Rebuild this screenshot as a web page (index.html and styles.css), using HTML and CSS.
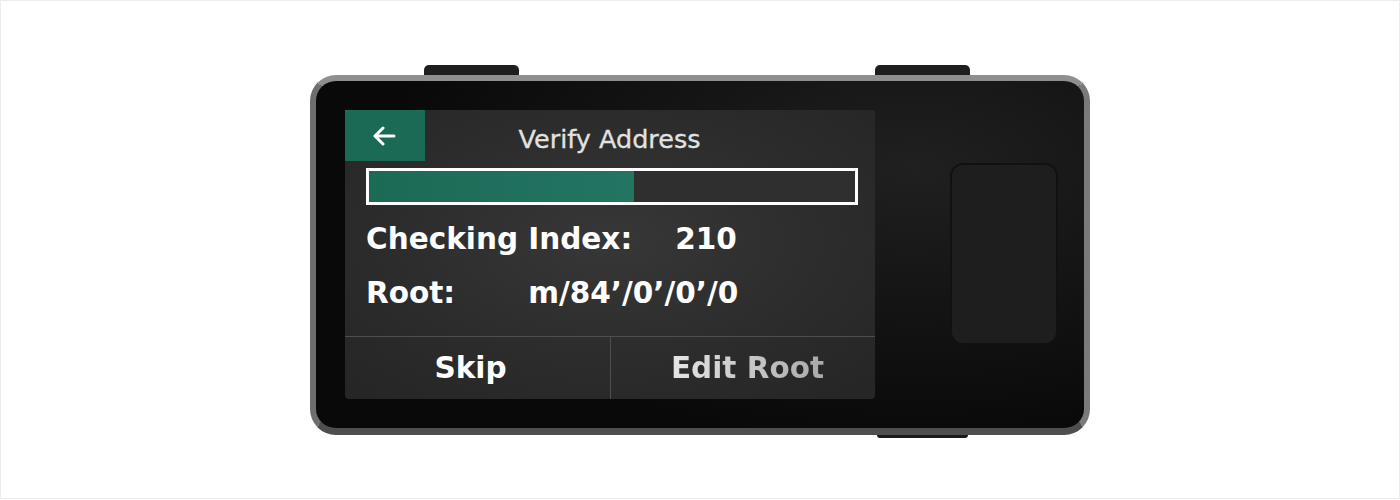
FILE: index.html
```html
<!DOCTYPE html>
<html>
<head>
<meta charset="utf-8">
<link rel="stylesheet" href="styles.css">
</head>
<body>
<div class="frame">
  <div class="device">
    <div class="tabs-top">
      <div class="tab tab-left"></div>
      <div class="tab tab-right"></div>
    </div>
    <div class="body">
      <div class="screen">
        <div class="header">
          <div class="back">
            <svg width="24" height="20" viewBox="0 0 24 20"><path d="M22 10H3M11 2L3 10l8 8" fill="none" stroke="#fff" stroke-width="3" stroke-linecap="round" stroke-linejoin="round"/></svg>
          </div>
          <div class="title">Verify Address</div>
        </div>
        <div class="progress"><div class="fill" style="width:54.5%"></div></div>
        <div class="row row-index"><span class="label">Checking Index:</span><span class="value">210</span></div>
        <div class="row row-root"><span class="label">Root:</span><span class="value">m/84’/0’/0’/0</span></div>
        <div class="actions">
          <div class="btn btn-skip">Skip</div>
          <div class="btn btn-edit"><span class="edit-text">Edit Root</span></div>
        </div>
      </div>
      <div class="sensor"></div>
    </div>
    <div class="tab-bottom"></div>
  </div>
</div>
</body>
</html>
```

FILE: styles.css
```css
html, body {
  margin: 0;
  padding: 0;
  background: #ffffff;
}
.frame {
  box-sizing: border-box;
  width: 1400px;
  height: 499px;
  border: 1px solid #ececec;
  display: flex;
  justify-content: center;
  padding-top: 64px;
}
.device {
  width: 780px;
  display: flex;
  flex-direction: column;
}
.tabs-top {
  display: flex;
  height: 10px;
  padding-left: 114px;
  gap: 356px;
}
.tab {
  width: 95px;
  height: 10px;
  background: #1e1e1e;
  border-radius: 5px 5px 0 0;
}
.body {
  box-sizing: border-box;
  width: 780px;
  height: 360px;
  border-radius: 26px;
  border-style: solid;
  border-width: 6px 6px 7px 6px;
  border-color: #8f8f8f #7a7a7a #4e4e4e #6e6e6e;
  background: radial-gradient(ellipse 70% 80% at 78% 25%, #202020 0%, #151515 45%, #090909 100%);
  display: flex;
  align-items: flex-start;
  padding: 29px 0 0 29px;
}
.screen {
  width: 530px;
  height: 289px;
  border-radius: 2px 2px 4px 4px;
  background: radial-gradient(ellipse 70% 70% at 50% 45%, #373737 0%, #2c2c2c 60%, #262626 100%);
  display: flex;
  flex-direction: column;
  font-family: "DejaVu Sans", sans-serif;
  color: #ffffff;
}
.header {
  display: flex;
  align-items: center;
  height: 51px;
}
.back {
  width: 80px;
  height: 51px;
  background: #1b6a56;
  display: flex;
  align-items: center;
  justify-content: center;
  padding-right: 2px;
  box-sizing: border-box;
}
.title {
  flex: 1;
  text-align: center;
  font-family: "DejaVu Sans", sans-serif;
  font-size: 25.5px;
  color: #e2e2e2;
  -webkit-text-stroke: 0.3px #e2e2e2;
  padding-right: 81px;
  padding-top: 6px;
}
.progress {
  box-sizing: border-box;
  margin: 7px 0 0 21px;
  width: 492px;
  height: 37px;
  border: 3px solid #ffffff;
  background: #2f2f2f;
}
.fill {
  height: 100%;
  background: linear-gradient(90deg, #1b6a56, #237562);
}
.row {
  display: flex;
  padding-left: 21px;
  font-weight: bold;
  font-size: 29.5px;
  line-height: 34px;
}
.row-index {
  margin-top: 17px;
}
.row-root {
  margin-top: 20px;
}
.row-index .value {
  margin-left: 43px;
}
.row-root .value {
  margin-left: 73px;
}
.actions {
  margin-top: auto;
  height: 62px;
  border-top: 1px solid #4e4e4e;
  display: flex;
}
.btn {
  display: flex;
  align-items: center;
  justify-content: center;
  font-weight: bold;
  font-size: 29.5px;
}
.btn-skip {
  width: 266px;
  border-right: 1px solid #4e4e4e;
  padding-right: 14px;
  box-sizing: border-box;
  color: #ffffff;
}
.btn-edit {
  flex: 1;
  padding-left: 9px;
  color: #cfcfcf;
}
.edit-text {
  background: linear-gradient(90deg, #e6e6e6, #a9a9a9);
  -webkit-background-clip: text;
  background-clip: text;
  color: transparent;
}
.sensor {
  box-sizing: border-box;
  margin: 53px 0 0 75px;
  width: 108px;
  height: 182px;
  border-radius: 13px;
  border: 2px solid #111111;
  background: #1e1e1e;
}
.tab-bottom {
  margin-left: 567px;
  width: 91px;
  height: 3px;
  background: #1a1a1a;
  border-radius: 0 0 4px 4px;
}
```
